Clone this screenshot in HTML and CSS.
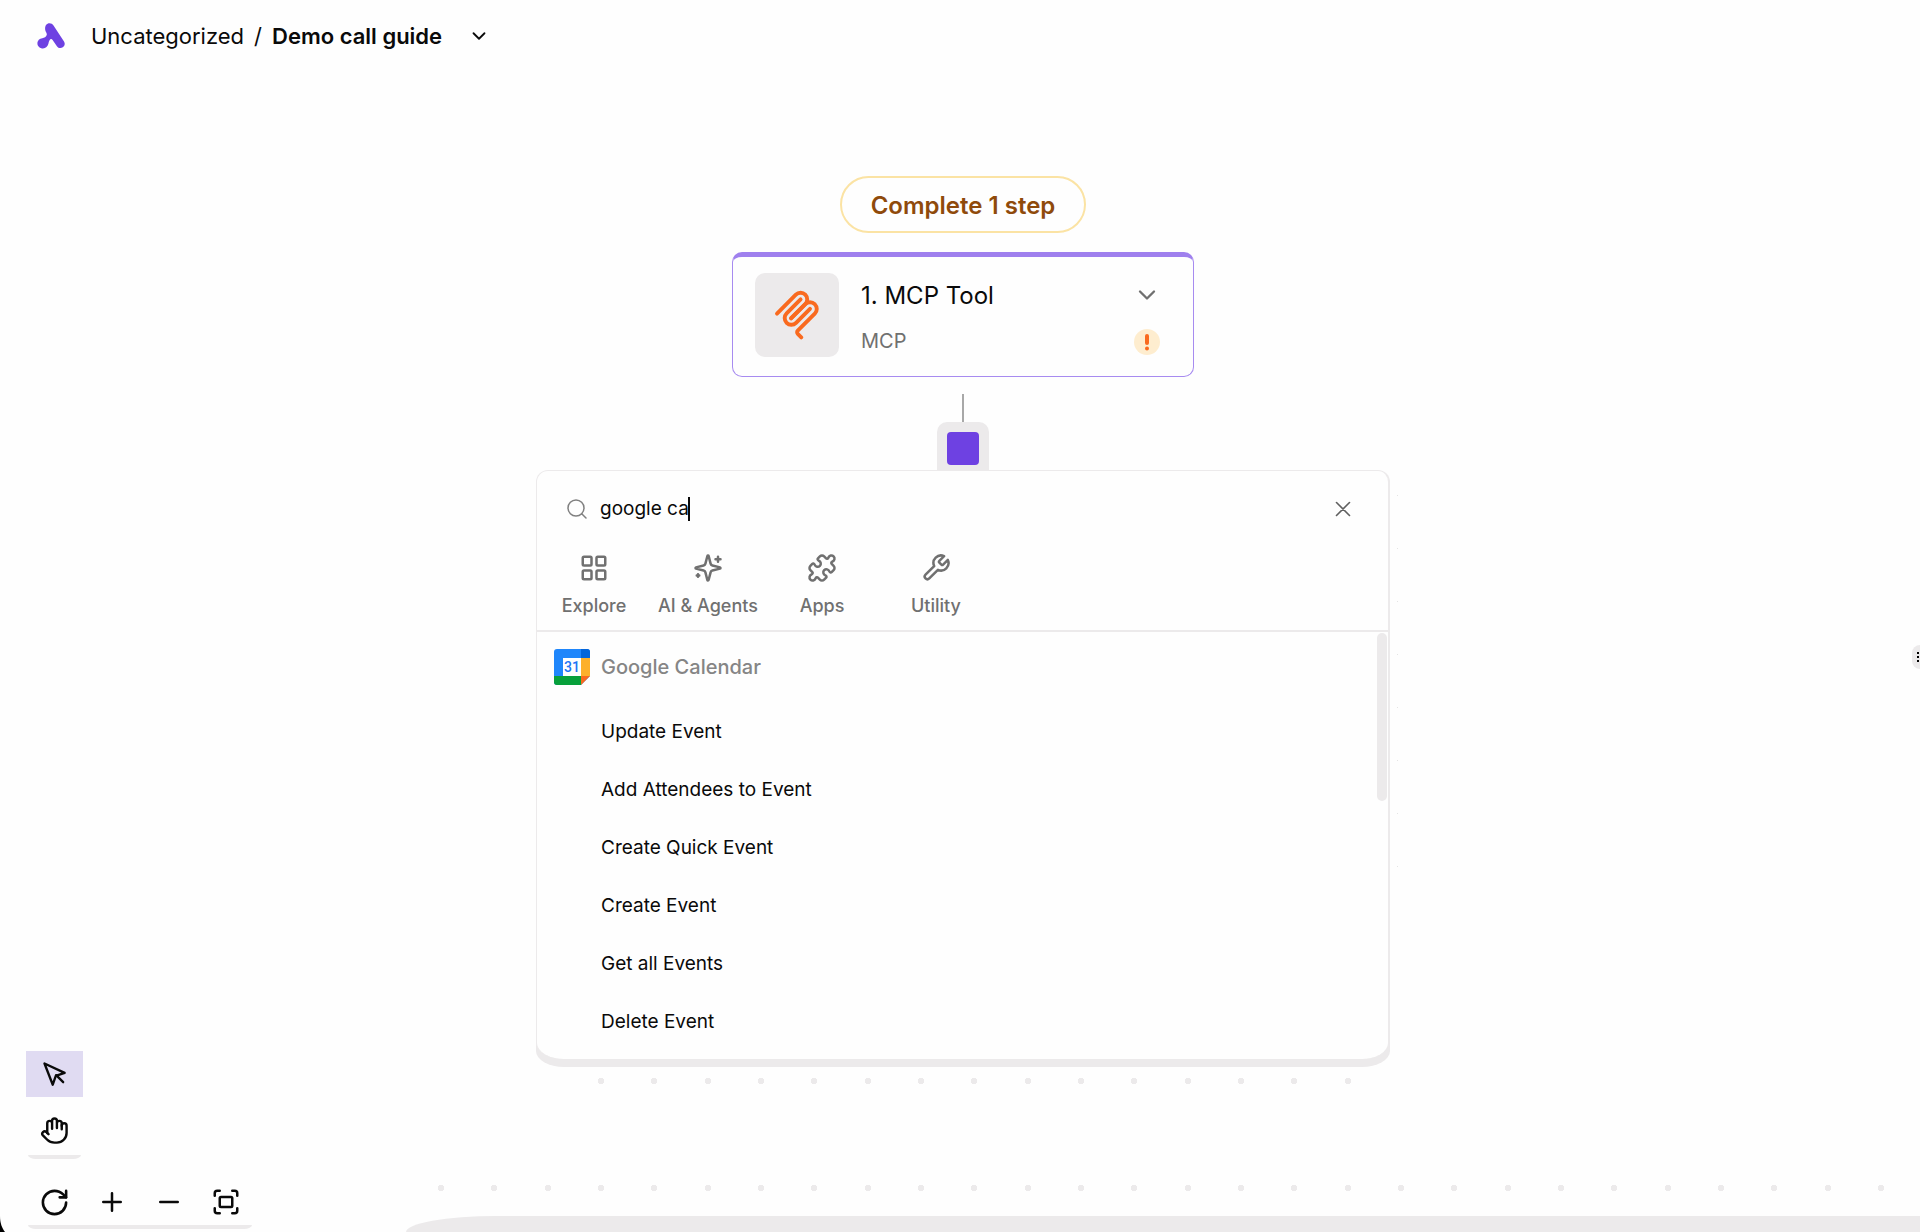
FILE: index.html
```html
<!DOCTYPE html>
<html lang="en">
<head>
<meta charset="utf-8">
<meta name="viewport" content="width=device-width, initial-scale=1">
<title>Demo call guide</title>
<link rel="stylesheet" href="styles.css">
</head>
<body>
<div class="builder">
  <header class="topbar">
    <a class="logo" href="#" aria-label="Home">
      <svg width="28" height="26" viewBox="0 0 28 26" fill="#6e41e2"><path d="M12.500.3c1.700 0 3 .8 4 2.200l10.500 15.900c1.300 2 .8 4.500-1.200 5.900s-4.600.9-5.900-1.100l-4.300-6.300c-.9-1.200-2.300-1.100-2.900.2-.6 1-.9 2-1.300 3.600-.6 2.700-2.700 4.700-5.400 4.700-2.900 0-5.600-2.200-5.600-5s2.200-5 4.900-5.200c2-.2 3.900-1.200 4.400-3.100.4-1.600-.4-2.500-1.200-4.200C7.300 4.300 8.800.3 12.500.3z"/></svg>
    </a>
    <nav class="crumbs" aria-label="Breadcrumb">
      <a href="#">Uncategorized</a>
      <span>/</span>
      <h1>Demo call guide</h1>
    </nav>
    <button class="plain" aria-label="Flow actions">
      <svg class="line" width="22" height="22" viewBox="0 0 24 24"><path d="m6 9 6 6 6-6"/></svg>
    </button>
  </header>

  <main class="flow">
    <button class="badge">Complete 1 step</button>

    <section class="step">
      <div class="step-icon">
        <svg width="50" height="50" viewBox="0 0 180 180" fill="none" stroke="#f96a1f" stroke-width="14" stroke-linecap="round"><path d="M18 84.850 85.880 16.970c9.370-9.370 24.570-9.370 33.940 0s9.370 24.570 0 33.940L68.560 102.180"/><path d="m69.270 101.470 50.550-50.560c9.380-9.370 24.570-9.370 33.950 0l.35.360c9.370 9.370 9.370 24.560 0 33.940L92.720 146.600c-3.120 3.120-3.120 8.190 0 11.310l12.610 12.610"/><path d="M102.850 33.940 52.650 84.150c-9.370 9.370-9.370 24.560 0 33.940s24.570 9.370 33.940 0l50.200-50.210"/></svg>
      </div>
      <div class="step-text">
        <h2>1. MCP Tool</h2>
        <p>MCP</p>
      </div>
      <div class="step-side">
        <button class="plain muted" aria-label="Step menu">
          <svg class="line" width="28" height="28" viewBox="0 0 24 24"><path d="m6 9 6 6 6-6"/></svg>
        </button>
        <svg width="26" height="26" viewBox="0 0 26 26" role="img" aria-label="Incomplete step"><circle cx="13" cy="13" r="13" fill="#feedcf"/><path d="M13 7v7M13 19.400v.1" stroke="#f96a1f" stroke-width="4" stroke-linecap="round"/></svg>
      </div>
    </section>

    <div class="edge"></div>
    <button class="add" aria-label="Add step"><span></span></button>

    <section class="picker" aria-label="Choose a step">
      <form class="search">
        <label for="q" aria-label="Search">
          <svg class="line" width="24" height="24" viewBox="0 0 24 24"><circle cx="11" cy="11" r="8"/><path d="m21 21-4.300-4.300"/></svg>
        </label>
        <input id="q" type="text" value="google ca" size="8" autocomplete="off">
        <span class="caret"></span>
        <button class="plain close" type="button" aria-label="Clear">
          <svg class="line" width="26" height="26" viewBox="0 0 24 24"><path d="M18 6 6 18M6 6l12 12"/></svg>
        </button>
      </form>
      <div class="tabs">
        <button class="tab"><svg class="line" width="30" height="30" viewBox="0 0 24 24"><rect x="3" y="3" width="7" height="7" rx="1"/><rect x="14" y="3" width="7" height="7" rx="1"/><rect x="14" y="14" width="7" height="7" rx="1"/><rect x="3" y="14" width="7" height="7" rx="1"/></svg>Explore</button>
        <button class="tab"><svg class="line" width="30" height="30" viewBox="0 0 24 24"><path d="M9.937 15.500A2 2 0 0 0 8.500 14.063l-6.135-1.582a.5.5 0 0 1 0-.962L8.500 9.936A2 2 0 0 0 9.937 8.500l1.582-6.135a.5.5 0 0 1 .963 0L14.063 8.500A2 2 0 0 0 15.500 9.937l6.135 1.581a.5.5 0 0 1 0 .964L15.500 14.063a2 2 0 0 0-1.437 1.437l-1.582 6.135a.5.5 0 0 1-.963 0z"/><path d="M20 3v4M22 5h-4M4 17v2M5 18H3"/></svg>AI &amp; Agents</button>
        <button class="tab"><svg class="line" width="30" height="30" viewBox="0 0 24 24"><path d="M19.439 7.850c-.049.322.059.648.289.878l1.568 1.568c.47.470.706 1.087.706 1.704s-.235 1.233-.706 1.704l-1.611 1.611a.980.980 0 0 1-.837.276c-.470-.070-.802-.480-.968-.925a2.501 2.501 0 1 0-3.214 3.214c.446.166.855.497.925.968a.979.979 0 0 1-.276.837l-1.610 1.610a2.404 2.404 0 0 1-1.705.707 2.402 2.402 0 0 1-1.704-.706l-1.568-1.568a1.026 1.026 0 0 0-.877-.290c-.493.074-.840.504-1.020.968a2.500 2.500 0 1 1-3.237-3.237c.464-.180.894-.527.967-1.020a1.026 1.026 0 0 0-.289-.877l-1.568-1.568A2.402 2.402 0 0 1 1.998 12c0-.617.236-1.234.706-1.704L4.230 8.770c.240-.240.581-.353.917-.303.515.077.877.528 1.073 1.010a2.500 2.500 0 1 0 3.259-3.259c-.482-.196-.933-.558-1.010-1.073-.050-.336.062-.676.303-.917l1.525-1.525A2.402 2.402 0 0 1 12 1.998c.617 0 1.234.236 1.704.706l1.568 1.568c.230.230.556.338.877.290.493-.074.840-.504 1.020-.968a2.500 2.500 0 1 1 3.237 3.237c-.464.180-.894.527-.967 1.020Z"/></svg>Apps</button>
        <button class="tab"><svg class="line" width="30" height="30" viewBox="0 0 24 24"><path d="M14.700 6.300a1 1 0 0 0 0 1.400l1.600 1.600a1 1 0 0 0 1.400 0l3.770-3.770a6 6 0 0 1-7.940 7.940l-6.910 6.910a2.120 2.120 0 0 1-3-3l6.910-6.910a6 6 0 0 1 7.940-7.940l-3.760 3.760z"/></svg>Utility</button>
      </div>
      <div class="results">
        <div class="group">
          <svg width="36" height="36" viewBox="0 0 36 36"><rect width="36" height="36" rx="3" fill="#1f86fb"/><path d="M27 0h6a3 3 0 0 1 3 3v6h-9z" fill="#0465d9"/><path d="M27 9h9v18h-9z" fill="#fdb02b"/><path d="M0 27h27v9H3a3 3 0 0 1-3-3z" fill="#07a03b"/><path d="M27 36h9v-9z" fill="#fefefe"/><path d="M27 27h9l-9 9z" fill="#f96a1f"/><path d="M9 9h18v18H9z" fill="#fefefe"/><text x="18" y="23" text-anchor="middle" font-family="Roboto, sans-serif" font-size="14" font-weight="500" fill="#1d74f5">31</text></svg>
          <h3>Google Calendar</h3>
        </div>
        <ul>
          <li><button>Update Event</button></li>
          <li><button>Add Attendees to Event</button></li>
          <li><button>Create Quick Event</button></li>
          <li><button>Create Event</button></li>
          <li><button>Get all Events</button></li>
          <li><button>Delete Event</button></li>
        </ul>
        <span class="thumb"></span>
      </div>
      <span class="specks"></span>
    </section>

    <div class="dots dots-upper"></div>
  </main>

  <div class="dots dots-lower"></div>
  <footer class="drawer"></footer>

  <div class="tools">
    <div class="tool-group">
      <button class="tool active" aria-label="Select"><svg class="line" width="28" height="28" viewBox="0 0 24 24"><path d="m3 3 7.070 18.200 2.600-7.600 7.600-2.600L3 3z"/><path d="m13 13 6 6"/></svg></button>
      <button class="tool" aria-label="Pan"><svg class="line" width="29" height="29" viewBox="0 0 24 24"><path d="M18 11V6a2 2 0 0 0-4 0M14 10V4a2 2 0 0 0-4 0v2M10 10.500V6a2 2 0 0 0-4 0v8"/><path d="M18 8a2 2 0 1 1 4 0v6a8 8 0 0 1-8 8h-2c-2.800 0-4.500-.860-5.990-2.340l-3.600-3.600a2 2 0 0 1 2.830-2.820L7 15"/></svg></button>
    </div>
    <div class="tool-group tool-row">
      <button class="tool" aria-label="Reset zoom"><svg class="line" width="31" height="31" viewBox="0 0 24 24"><path d="M21 12a9 9 0 1 1-9-9c2.520 0 4.930 1 6.740 2.740L21 8"/><path d="M21 3v5h-5"/></svg></button>
      <button class="tool" aria-label="Zoom in"><svg class="line" width="30" height="30" viewBox="0 0 24 24"><path d="M5 12h14M12 5v14"/></svg></button>
      <button class="tool" aria-label="Zoom out"><svg class="line" width="30" height="30" viewBox="0 0 24 24"><path d="M5 12h14"/></svg></button>
      <button class="tool" aria-label="Fit to view"><svg class="line" width="30" height="30" viewBox="0 0 24 24"><path d="M3 7V5a2 2 0 0 1 2-2h2M17 3h2a2 2 0 0 1 2 2v2M21 17v2a2 2 0 0 1-2 2h-2M7 21H5a2 2 0 0 1-2-2v-2"/><rect x="7" y="8" width="10" height="8" rx="1"/></svg></button>
    </div>
  </div>

  <button class="handle" aria-label="Resize panel"><svg width="12" height="24" viewBox="0 0 12 24"><path d="M5 7h2v2H5zM5 11h2v2H5zM5 15h2v2H5zM9 7h2v2H9zM9 11h2v2H9zM9 15h2v2H9z"/></svg></button>
  <svg class="corner" width="6" height="16" viewBox="0 0 6 16"><path d="M0 0c0 7 2 12 5 16H0z"/></svg>
</div>
</body>
</html>
```
FILE: styles.css
```css
* { box-sizing: border-box; }

body {
  margin: 0;
  background: #fefefe;
  color: #0a0a0a;
  font-family: Inter, "Liberation Sans", sans-serif;
  font-size: 19px;
  line-height: 24px;
}

h1, h2, h3, p, ul { margin: 0; padding: 0; font-weight: 400; }
ul { list-style: none; }
a { color: inherit; text-decoration: none; }
svg { display: block; flex: none; }
button, input { font: inherit; color: inherit; background: none; border: 0; padding: 0; }

.line {
  fill: none;
  stroke: currentColor;
  stroke-width: 2;
  stroke-linecap: round;
  stroke-linejoin: round;
}

.plain { display: flex; }
.muted { color: #707070; }

.builder {
  position: relative;
  display: flex;
  flex-direction: column;
  min-height: 100vh;
  overflow: hidden;
}

/* Top bar */
.topbar {
  display: flex;
  align-items: center;
  height: 72px;
  padding-left: 37px;
}
.crumbs {
  display: flex;
  gap: 10px;
  margin: 0 26px 0 26px;
  font-size: 22px;
}
.crumbs h1 { font-size: 22px; font-weight: 600; }

/* Flow column */
.flow {
  display: flex;
  flex-direction: column;
  align-items: center;
  padding: 104px 0 0 6px;
}
.badge {
  height: 57px;
  padding: 2px 29px 0;
  border: 2px solid #fbe3a4;
  border-radius: 29px;
  color: #8f4a0b;
  font-size: 24px;
  font-weight: 600;
}
.step {
  display: flex;
  width: 462px;
  height: 125px;
  margin: 19px 0 17px;
  padding: 16px 32px 0 22px;
  border: 1px solid #a78bf0;
  border-top: 5px solid #9f80ee;
  border-radius: 10px;
}
.step-icon {
  display: grid;
  place-items: center;
  width: 84px;
  height: 84px;
  border-radius: 10px;
  background: #eceaeb;
}
.step-text { flex: 1; padding: 8px 0 0 22px; }
.step-text h2 { font-size: 24px; line-height: 30px; }
.step-text p { margin-top: 18px; font-size: 20px; color: #707070; }
.step-side {
  display: flex;
  flex-direction: column;
  align-items: center;
  gap: 20px;
  padding-top: 8px;
}
.edge { width: 2px; height: 28px; background: #a8a8a8; }
.add {
  display: flex;
  justify-content: center;
  width: 52px;
  height: 48px;
  padding-top: 10px;
  border-radius: 10px 10px 0 0;
  background: #eceaeb;
}
.add span { width: 32px; height: 33px; border-radius: 4px; background: #6e41e2; }

/* Step picker */
.picker {
  position: relative;
  width: 854px;
  border: 1px solid #eceaeb;
  border-right-width: 2px;
  border-bottom: 0;
  border-radius: 12px 12px 28px 28px / 12px 12px 16px 16px;
  box-shadow: 0 8px 0 #eceaeb;
  background: #fefefe;
}
.search {
  display: flex;
  align-items: center;
  height: 74px;
  padding: 2px 32px 0 28px;
}
.search label { color: #808080; margin-right: 11px; }
.search .line { stroke-width: 1.5; }
.search input { field-sizing: content; outline: 0; }
.caret { width: 2px; height: 24px; margin-left: -1px; background: #0a0a0a; }
.close { margin-left: auto; color: #606060; }
.tabs {
  display: flex;
  padding: 8px 0 12px;
  border-bottom: 2px solid #eceaeb;
}
.tab {
  display: flex;
  flex-direction: column;
  align-items: center;
  gap: 11px;
  width: 114px;
  color: #707070;
  font-size: 18px;
  font-weight: 500;
}
.results { position: relative; padding: 1px 14px 8px 17px; }
.group { display: flex; align-items: center; gap: 11px; height: 68px; }
.group h3 { font-size: 20px; font-weight: 500; color: #858585; }
.results ul { padding-top: 2px; }
.results li button {
  display: block;
  width: 100%;
  height: 58px;
  padding-left: 47px;
  text-align: left;
}
.thumb {
  position: absolute;
  top: 1px;
  right: 1px;
  width: 10px;
  height: 168px;
  border-radius: 5px;
  background: #eceaeb;
}
.specks {
  position: absolute;
  top: 24px;
  right: -10px;
  width: 1px;
  height: 374px;
  background: repeating-linear-gradient(#e4e4e4 0 1px, transparent 1px 53px);
}

/* Canvas dot grid: three dots in every 160px */
.dots {
  height: 6px;
  background-image:
    radial-gradient(circle at 3px 3px, #eceaeb 3px, transparent 3px),
    radial-gradient(circle at 56px 3px, #eceaeb 3px, transparent 3px),
    radial-gradient(circle at 110px 3px, #eceaeb 3px, transparent 3px);
  background-size: 160px 6px;
}
.dots-upper { width: 754px; margin: 19px 0 0 24px; }
.dots-lower { margin: auto 36px 0 438px; }
.drawer {
  height: 16px;
  margin: 25px 0 0 406px;
  border-radius: 90px 0 0 0 / 16px 0 0 0;
  background: #eceaeb;
}

/* Floating controls */
.tools {
  position: absolute;
  left: 26px;
  bottom: 3px;
  display: flex;
  flex-direction: column;
  align-items: flex-start;
  gap: 20px;
}
.tool-group { display: flex; flex-direction: column; }
.tool-group::after {
  content: "";
  height: 4px;
  margin: 0 2px;
  border-radius: 0 0 8px 8px / 0 0 4px 4px;
  background: #eceaeb;
}
.tool-row { display: grid; grid-template-columns: repeat(4, 57px); }
.tool-row::after { grid-column: 1 / -1; }
.tool { display: grid; place-items: center; width: 57px; height: 46px; }
.tool-group:first-child .tool + .tool { height: 58px; padding-top: 9px; }
.active { background: #e0dbf2; }

.handle {
  position: absolute;
  right: 0;
  top: 645px;
  width: 8px;
  overflow: hidden;
  border-radius: 12px 0 0 12px;
  background: #eceaeb;
}
.corner { position: absolute; left: 0; bottom: 0; }
```
